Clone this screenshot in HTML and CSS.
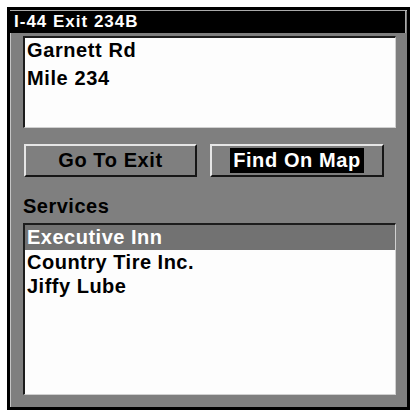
FILE: index.html
```html
<!DOCTYPE html>
<html>
<head>
<meta charset="utf-8">
<title>I-44 Exit 234B</title>
<link rel="stylesheet" href="styles.css">
</head>
<body>
<div class="frame">
  <div class="title">I-44 Exit 234B</div>

  <div class="panel">
    <div class="info">
      <div class="line">Garnett Rd</div>
      <div class="line">Mile 234</div>
    </div>

    <div class="buttons">
      <button class="btn">Go To Exit</button>
      <button class="btn focus"><span>Find On Map</span></button>
    </div>

    <div class="label">Services</div>

    <ul class="list">
      <li class="sel">Executive Inn</li>
      <li>Country Tire Inc.</li>
      <li>Jiffy Lube</li>
    </ul>
  </div>
</div>
</body>
</html>
```

FILE: styles.css
```css
body{
  margin:0;
  background:#fff;
  font-family:"Liberation Sans",Arial,sans-serif;
  font-weight:bold;
  color:#000;
}
.frame{
  margin:7px 0 0 7px;
  width:403px;
  height:403px;
  box-sizing:border-box;
  border:3px solid #000;
  background:#7f7f7f;
  box-shadow:inset 1px 1px 0 #c4c4c4;
  display:flex;
  flex-direction:column;
}
.title{
  height:23px;
  margin-right:1px;
  padding-left:4px;
  background:#000;
  color:#fff;
  font-size:17px;
  line-height:24px;
  letter-spacing:1px;
  box-shadow:inset 0 1px 0 #aaa,inset -1px 0 0 #aaa;
}
.panel{
  flex:1;
  display:flex;
  flex-direction:column;
  padding:3px 11px 12px 13px;
}
.info{
  height:92px;
  box-sizing:border-box;
  background:#fdfdfd;
  border-top:2px solid #1c1c1c;
  border-left:2px solid #1c1c1c;
  border-right:1px solid #d0d0d0;
  border-bottom:1px solid #d0d0d0;
  padding-left:2px;
  font-size:20px;
  letter-spacing:0.6px;
}
.line{
  line-height:24px;
}
.line + .line{
  margin-top:4px;
}
.buttons{
  display:flex;
  gap:13px;
  margin:16px 0 0 1px;
}
.btn{
  height:33px;
  width:173px;
  box-sizing:border-box;
  background:#7f7f7f;
  border-top:2px solid #e6e6e6;
  border-left:2px solid #e6e6e6;
  border-right:2px solid #161616;
  border-bottom:2px solid #161616;
  font-family:inherit;
  font-weight:bold;
  font-size:20px;
  letter-spacing:0.6px;
  color:#000;
  padding:0;
}
.btn.focus{
  width:174px;
}
.btn.focus span{
  display:inline-block;
  background:#000;
  color:#fff;
  padding:0 3px;
  line-height:25px;
}
.label{
  margin-top:17px;
  font-size:20px;
  line-height:24px;
  letter-spacing:0.5px;
}
.list{
  list-style:none;
  margin:5px 0 0 0;
  padding:0;
  flex:1;
  background:#fdfdfd;
  border-top:2px solid #1c1c1c;
  border-left:2px solid #1c1c1c;
  border-right:1px solid #d0d0d0;
  border-bottom:1px solid #d0d0d0;
  font-size:20px;
  letter-spacing:0.5px;
}
.list li{
  line-height:24.5px;
  padding-left:2px;
}
.list li.sel{
  background:#727272;
  color:#fff;
}
```
